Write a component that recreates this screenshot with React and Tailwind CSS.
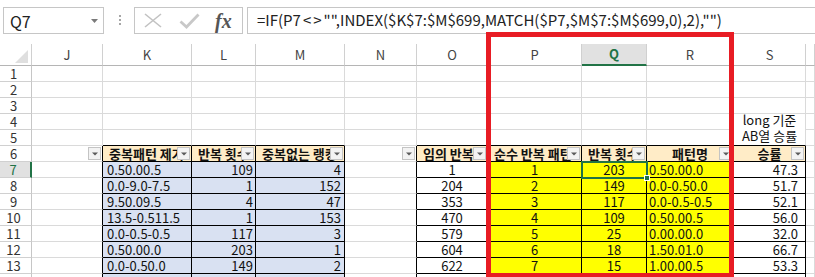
import React from "react";

const COLS = ["J", "K", "L", "M", "N", "O", "P", "Q", "R", "S", "T"];
const TABLE_COLS = ["K", "L", "M", "O", "P", "Q", "R", "S"];

const headers = {
  K: "중복패턴 제거",
  L: "반복 횟수",
  M: "중복없는 랭킹",
  O: "임의 반복",
  P: "순수 반복 패턴",
  Q: "반복 횟수",
  R: "패턴명",
  S: "승률",
};

const data = [
  { K: "0.50.00.5", L: "109", M: "4", O: "1", P: "1", Q: "203", R: "0.50.00.0", S: "47.3" },
  { K: "0.0-9.0-7.5", L: "1", M: "152", O: "204", P: "2", Q: "149", R: "0.0-0.50.0", S: "51.7" },
  { K: "9.50.09.5", L: "4", M: "47", O: "353", P: "3", Q: "117", R: "0.0-0.5-0.5", S: "52.1" },
  { K: "13.5-0.511.5", L: "1", M: "153", O: "470", P: "4", Q: "109", R: "0.50.00.5", S: "56.0" },
  { K: "0.0-0.5-0.5", L: "117", M: "3", O: "579", P: "5", Q: "25", R: "0.00.00.0", S: "32.0" },
  { K: "0.50.00.0", L: "203", M: "1", O: "604", P: "6", Q: "18", R: "1.50.01.0", S: "66.7" },
  { K: "0.0-0.50.0", L: "149", M: "2", O: "622", P: "7", Q: "15", R: "1.00.00.5", S: "53.3" },
];

const dataAlign = {
  K: "justify-start pl-[4px]",
  L: "justify-end pr-[2px]",
  M: "justify-end pr-[3px]",
  O: "justify-center",
  P: "justify-center",
  Q: "justify-center",
  R: "justify-start pl-[2px]",
  S: "justify-end pr-[7px]",
};

const isTable = (col, r) => TABLE_COLS.includes(col) && r >= 6 && r <= 14;

function Dropdown() {
  return (
    <span className="absolute right-px top-px flex h-[13px] w-[13px] items-center justify-center border border-[#c4c4c4] bg-[#f3f3f3]">
      <svg width="6" height="4" viewBox="0 0 6 4">
        <path d="M0 0.5h6L3 3.5z" fill="#5a5a5a" />
      </svg>
    </span>
  );
}

function Cell({ col, r }) {
  const i = COLS.indexOf(col);
  const right = isTable(col, r) || isTable(COLS[i + 1], r);
  const bottom = isTable(col, r) || isTable(col, r + 1);
  let cls = `relative flex items-center whitespace-nowrap border-r border-b leading-[15px] ${
    right ? "border-r-black" : "border-r-[#dadada]"
  } ${bottom ? "border-b-black" : "border-b-[#dadada]"}`;
  let content = null;

  if (r === 4 && col === "S") {
    return (
      <div className="row-span-2 flex flex-col items-center justify-end border-r border-b border-r-[#dadada] border-b-black pb-px text-[13px] leading-[16px] text-[#111]">
        <span>long 기준</span>
        <span>AB열 승률</span>
      </div>
    );
  }

  if (r === 6) {
    if (headers[col]) {
      const centered = col === "R" || col === "S";
      cls += ` overflow-hidden bg-[#ffecc7] font-bold text-[13px] text-[#111] ${centered ? "justify-center" : "pl-[6px]"}`;
      content = <span>{headers[col]}</span>;
    }
    if (col !== "T") {
      return (
        <div className={cls}>
          {content}
          <Dropdown />
        </div>
      );
    }
  }

  if (r >= 7) {
    if (["K", "L", "M"].includes(col)) cls += " bg-[#d9e1f2]";
    if (["P", "Q", "R"].includes(col)) cls += " bg-[#ffff00]";
    const row = data[r - 7];
    if (row && row[col]) {
      cls += ` text-[13px] text-[#111] ${dataAlign[col]}`;
      content = <span>{row[col]}</span>;
    }
  }

  return <div className={cls}>{content}</div>;
}

export default function App() {
  const rowNums = Array.from({ length: 14 }, (_, k) => k + 1);

  return (
    <div className="relative h-[277px] w-[815px] overflow-hidden bg-white font-['Noto_Sans_CJK_KR','Noto_Sans',sans-serif] text-[#222]">
      {/* formula bar */}
      <div className="flex h-[44px] items-start pt-[7px]">
        <div className="ml-[3px] flex h-[27px] w-[101px] items-center justify-between border border-[#c6c6c6] pl-[6px] pr-[5px] text-[16px]">
          <span>Q7</span>
          <svg width="7" height="4" viewBox="0 0 7 4">
            <path d="M0 0h7L3.5 4z" fill="#7a7a7a" />
          </svg>
        </div>
        <div className="ml-[15px] mt-[8px] flex flex-col gap-[2px]">
          <span className="h-[2px] w-[2px] bg-[#a6a6a6]" />
          <span className="h-[2px] w-[2px] bg-[#a6a6a6]" />
          <span className="h-[2px] w-[2px] bg-[#a6a6a6]" />
        </div>
        <div className="ml-[13px] flex h-[27px] w-[109px] items-center border border-[#c6c6c6] pl-[9px]">
          <svg width="18" height="15" viewBox="0 0 18 15">
            <path d="M1 1L17 14M17 1L1 14" stroke="#c2c2c2" strokeWidth="1.6" fill="none" />
          </svg>
          <svg className="ml-[17px]" width="21" height="16" viewBox="0 0 21 16">
            <path d="M1.5 8.5L7.5 14L19.5 1.5" stroke="#c8c8c8" strokeWidth="2.8" fill="none" />
          </svg>
          <span className="ml-[15px] font-['Liberation_Serif',serif] text-[20px] font-bold italic leading-none text-[#555]">
            fx
          </span>
        </div>
        <div className="ml-[4px] flex h-[27px] flex-1 items-center border-y border-l border-[#c6c6c6] pl-[9px] text-[15px] text-[#222]">
          =IF(P7<span className="mx-[2px]">&lt;</span>
          <span className="mr-[2px]">&gt;</span>"",INDEX($K$7:$M$699,MATCH($P7,$M$7:$M$699,0),2),"")
        </div>
      </div>

      {/* sheet */}
      <div className="grid grid-cols-[32px_71px_89px_64px_89px_72px_71px_94px_65px_87px_72px_1fr] grid-rows-[22px_repeat(14,16px)]">
        <div className="relative border-r border-b border-r-[#d0d0d0] border-b-[#b5b5b5]">
          <svg className="absolute left-[15px] top-[6px]" width="13" height="13" viewBox="0 0 13 13">
            <path d="M13 0V13H0z" fill="#dfdfdf" />
          </svg>
        </div>
        {COLS.map((c) =>
          c === "Q" ? (
            <div
              key={c}
              className="flex items-center justify-center border-r border-b-2 border-r-[#d0d0d0] border-b-[#217346] bg-[#e1e1e1] text-[13px] font-bold text-[#217346]"
            >
              {c}
            </div>
          ) : (
            <div
              key={c}
              className="flex items-center justify-center border-r border-b border-r-[#d0d0d0] border-b-[#b5b5b5] text-[13px] text-[#444]"
            >
              {c === "T" ? "" : c}
            </div>
          )
        )}

        {rowNums.map((r) => (
          <React.Fragment key={r}>
            {r === 7 ? (
              <div className="flex items-center justify-center border-r-2 border-b border-r-[#217346] border-b-[#d0d0d0] bg-[#e1e1e1] pr-[4px] text-[13px] leading-[15px] text-[#217346]">
                {r}
              </div>
            ) : (
              <div className="flex items-center justify-center border-r border-b border-r-[#c6c6c6] border-b-[#d0d0d0] pr-[4px] text-[13px] leading-[15px] text-[#333]">
                {r}
              </div>
            )}
            {COLS.filter((c) => !(r === 5 && c === "S")).map((c) => (
              <Cell key={c} col={c} r={r} />
            ))}
          </React.Fragment>
        ))}
      </div>

      {/* active cell Q7 */}
      <div className="pointer-events-none absolute left-[581px] top-[161px] h-[18px] w-[67px] border-2 border-[#217346]" />
      <div className="pointer-events-none absolute left-[644px] top-[175px] h-[6px] w-[6px] border border-white bg-[#217346]" />

      {/* red highlight box */}
      <div className="pointer-events-none absolute left-[486px] top-[32px] h-[246px] w-[248px] border-[5px] border-[#e81c24]" />
    </div>
  );
}
